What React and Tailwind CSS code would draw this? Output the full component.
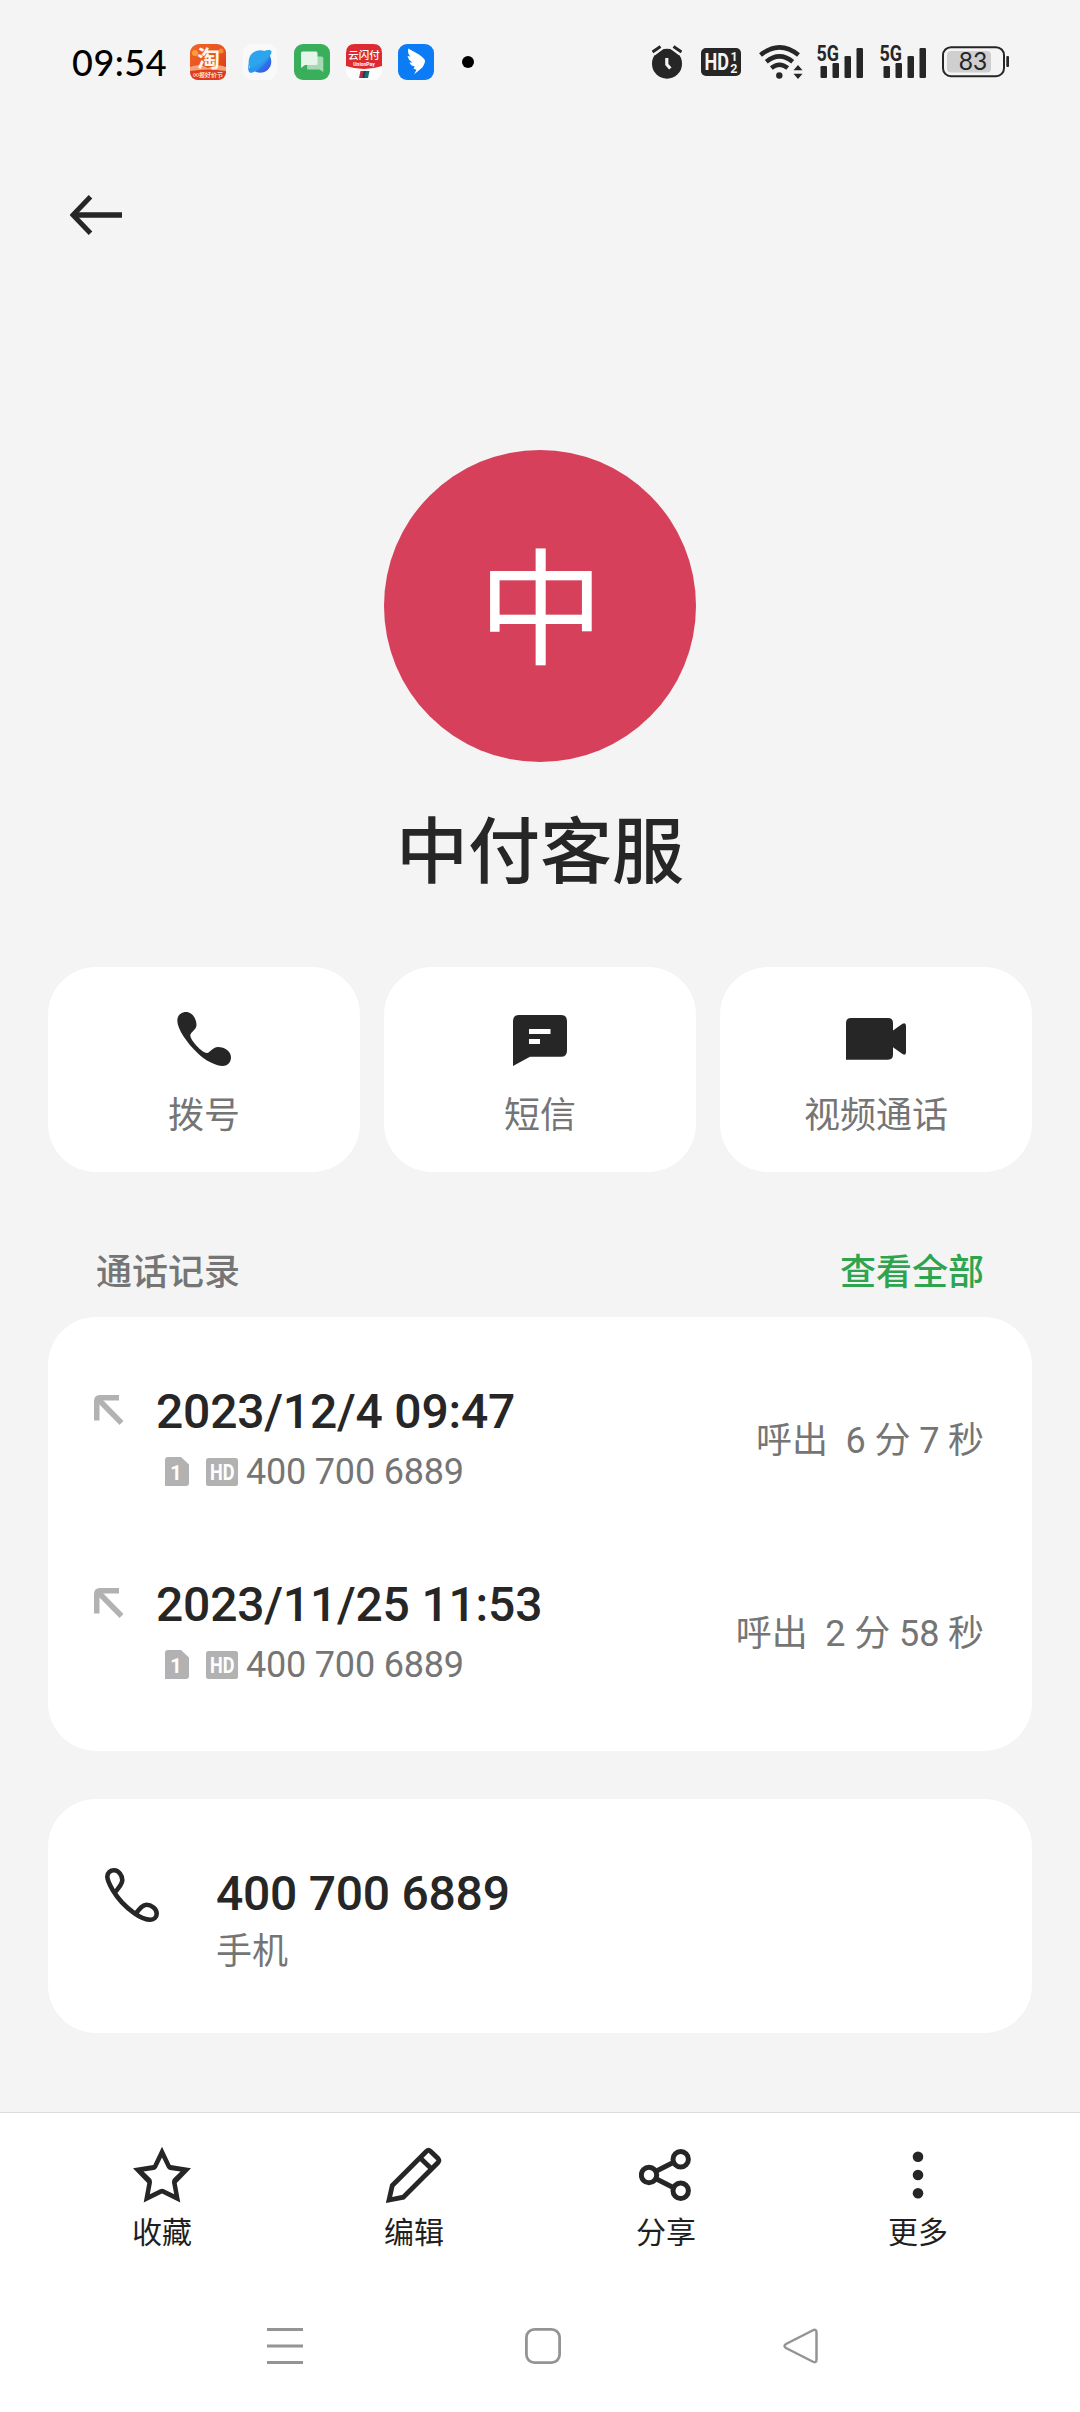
import React from 'react';

const calls = [
    { id: 1, time: '2023/12/4 09:47', number: '400 700 6889', duration: '呼出  6 分 7 秒' },
    { id: 2, time: '2023/11/25 11:53', number: '400 700 6889', duration: '呼出  2 分 58 秒' }
];

const TaobaoIcon = () => (
    <svg className="overflow-visible" width="36" height="36" viewBox="0 0 36 36">
        <defs>
            <linearGradient id="tb" x1="0" y1="0" x2="1" y2="1">
                <stop offset="0" stopColor="#f0642a" />
                <stop offset="0.5" stopColor="#e8541f" />
                <stop offset="1" stopColor="#d83018" />
            </linearGradient>
        </defs>
        <rect width="36" height="36" rx="9" fill="url(#tb)" />
        <circle cx="5" cy="9" r="3" fill="#f9a03c" />
        <circle cx="31" cy="7" r="2.5" fill="#f58a3a" />
        <path d="M0 23 Q9 19 18 24 Q27 19 36 23 V28 H0Z" fill="#f2a47c" />
        <path d="M0 27 Q18 24 36 27 Q36 36 27 36 H9 Q0 36 0 27Z" fill="#e23a1c" />
        <text x="18.500" y="22.500" textAnchor="middle" fontSize="23" fontWeight="700" fill="#fff3ea" fontFamily="Noto Sans CJK SC, sans-serif">淘</text>
        <text x="18" y="33.300" textAnchor="middle" fontSize="6" fontWeight="500" fill="#fff" fontFamily="Noto Sans CJK SC, sans-serif">∞报好价节</text>
    </svg>
);

const BrowserIcon = () => (
    <svg width="36" height="36" viewBox="0 0 36 36">
        <defs>
            <linearGradient id="br" x1="0" y1="0" x2="1" y2="1">
                <stop offset="0" stopColor="#2fb4ee" />
                <stop offset="0.55" stopColor="#2b86ee" />
                <stop offset="1" stopColor="#3a44e0" />
            </linearGradient>
        </defs>
        <rect x="1" width="34" height="36" rx="9" fill="#f9f9f9" />
        <circle cx="18" cy="17.5" r="11.3" fill="url(#br)" />
        <path d="M22 7 C26 5.500 30 5.500 29.500 8.500 C29 12 22 20 8 25 C6 19 9 11 14 8Z" fill="#2da5ee" />
        <path d="M7 18 C5.500 24 6 29 9 28.800 C13 28.500 24 20 28.500 12 C24 17 15 23 7 24Z" fill="#2b96ee" />
    </svg>
);

const MessagesIcon = () => (
    <svg width="36" height="36" viewBox="0 0 36 36">
        <rect width="36" height="36" rx="9" fill="#3aaf5b" />
        <path d="M14 12.500 H27.500 Q29.300 12.500 29.300 14.300 V28 L25.500 25.500 H14.500 Q13 25.500 13 24Z" fill="#a5dab2" />
        <path d="M8.500 7.500 H22 Q23.500 7.500 23.500 9 V19.500 Q23.500 21 22 21 H11 L7 24 V9 Q7 7.500 8.500 7.500Z" fill="#e6f5e9" />
    </svg>
);

const UnionPayIcon = () => (
    <svg className="overflow-visible" width="36" height="36" viewBox="0 0 36 36">
        <rect width="36" height="36" rx="9" fill="#fdfdfd" />
        <path d="M0 9 Q0 0 9 0 H27 Q36 0 36 9 V22 Q27 25 18 25 Q9 25 0 22Z" fill="#dd2a30" />
        <text x="18" y="15" textAnchor="middle" fontSize="10.500" fontWeight="500" fill="#fff" fontFamily="Noto Sans CJK SC, sans-serif">云闪付</text>
        <text x="18" y="21.500" textAnchor="middle" fontSize="5" fontWeight="700" fill="#fff" fontFamily="Roboto, sans-serif">UnionPay</text>
        <path d="M14.500 27 H18 L16.500 34 H13Z" fill="#c8273a" />
        <path d="M17.500 27 H20.500 L19 34 H16Z" fill="#1d3f66" />
        <path d="M20 27 H23.500 L22 34 H18.500Z" fill="#14716f" />
    </svg>
);

const DingTalkIcon = () => (
    <svg width="36" height="36" viewBox="0 0 36 36">
        <rect width="36" height="36" rx="9" fill="#0b7cf5" />
        <path d="M10.300 4.500 C16 8 23 10.500 26.500 15.500 C27.500 17.300 27 18.500 25.500 21.500 L24.300 23.500 L16 30.500 L18.500 25.800 L15.500 24.800 L16.800 22.500 C14 22 12.500 20.800 11.500 18.500 L14.500 18.400 C11.500 16.800 10.300 14.800 9.600 12 L12.500 12.600 C10.200 10.500 9.600 8 10.300 4.500Z" fill="#fff" />
    </svg>
);

const AlarmIcon = () => (
    <svg width="30" height="34" viewBox="0 0 30 34">
        <circle cx="15" cy="18.700" r="15" fill="#262626" />
        <path d="M1 7.500 L9 1.500 M21 1.500 L29 7.500" stroke="#f4f4f4" strokeWidth="7" />
        <path d="M0.500 7 L8.500 1.500 M21.500 1.500 L29.500 7" stroke="#262626" strokeWidth="3" />
        <path d="M14.800 13 V19.500 L18.300 23.500" fill="none" stroke="#f4f4f4" strokeWidth="3.200" />
    </svg>
);

const HdBadge = () => (
    <svg className="overflow-visible" width="40" height="28" viewBox="0 0 40 28">
        <rect width="40" height="28" rx="5" fill="#262626" />
        <g fill="#f4f4f4" fontFamily="Roboto, sans-serif" fontWeight="700">
            <text x="3.500" y="22" fontSize="23" textLength="24.500" lengthAdjust="spacingAndGlyphs">HD</text>
            <text x="29.500" y="12.800" fontSize="12.500">1</text>
            <text x="29.300" y="25" fontSize="12.500">2</text>
        </g>
    </svg>
);

const WifiIcon = () => (
    <svg width="44" height="34" viewBox="0 0 44 34">
        <g fill="none" stroke="#262626" strokeWidth="4.500">
            <path d="M1.500 10 Q20.500 -5.300 39.500 10" />
            <path d="M7.300 16.800 Q20.500 6 33.700 16.800" />
            <path d="M12.300 23 Q20.500 16.500 28.700 23" />
        </g>
        <circle cx="20.300" cy="30.500" r="3.200" fill="#262626" />
        <path d="M34.500 25.300 L39 20 L43.500 25.300Z M34.500 28.700 H43.500 L39 34Z" fill="#262626" />
    </svg>
);

const SignalIcon = () => (
    <svg className="overflow-visible" width="46" height="32" viewBox="0 0 46 32" fill="#262626">
        <rect x="3.500" y="20" width="6.500" height="12" rx="1.200" />
        <rect x="15.500" y="17" width="6.500" height="15" rx="1.200" />
        <rect x="27.500" y="10" width="6.500" height="22" rx="1.200" />
        <rect x="39.500" y="2" width="6.500" height="30" rx="1.200" />
        <text x="-0.500" y="15.300" fontSize="21.500" fontWeight="700" fontFamily="Roboto, sans-serif" textLength="22.500" lengthAdjust="spacingAndGlyphs">5G</text>
    </svg>
);

const BatteryIcon = () => (
    <svg className="overflow-visible" width="67" height="32" viewBox="0 0 67 32">
        <rect x="5" y="5" width="44" height="21.500" rx="4" fill="#cfcfcf" />
        <rect x="1" y="1.200" width="61" height="29" rx="8" fill="none" stroke="#262626" strokeWidth="2" />
        <rect x="64.300" y="10" width="2.700" height="11" rx="1" fill="#262626" />
        <text x="31" y="24.300" textAnchor="middle" fontSize="24.500" fill="#262626" fontFamily="Lato, sans-serif">83</text>
    </svg>
);

const StatusBar = () => (
    <div className="flex h-[124px] items-center pr-[71px] pl-[72px]">
        <span className="w-[118px] font-['Lato'] text-[36px] leading-none font-medium tracking-[0.5px] text-black">09:54</span>
        <div className="flex items-center gap-4">
            <TaobaoIcon />
            <BrowserIcon />
            <MessagesIcon />
            <UnionPayIcon />
            <DingTalkIcon />
        </div>
        <span className="ml-7 size-3 rounded-full bg-black" />
        <div className="ml-auto flex items-center">
            <AlarmIcon />
            <span className="ml-[19px]"><HdBadge /></span>
            <span className="ml-[18px]"><WifiIcon /></span>
            <span className="ml-[14px]"><SignalIcon /></span>
            <span className="ml-[17px]"><SignalIcon /></span>
            <span className="ml-4"><BatteryIcon /></span>
        </div>
    </div>
);

const DialIcon = () => (
    <svg width="54" height="54" viewBox="0 0 54 54" fill="#262626">
        <path d="M0.300 8.500 C0.300 3.500 4 0 9 0 C15 0 19.500 6.500 19.500 13 C19.500 18 13.300 20 13.300 23.500 C13.300 28 25 41 30 41 C33 41 35.500 35 41 35 C48 35 54 39.500 54 45.500 C54 50.500 50 54 45.500 54 C39 54 28 48.500 20.500 41 C10 31 0.300 17 0.300 8.500Z" />
    </svg>
);

const SmsIcon = () => (
    <svg width="54" height="54" viewBox="0 -3 54 54">
        <path d="M6 0 H48 Q54 0 54 6 V35.700 Q54 41.700 48 41.700 H17 L0 51 V6 Q0 0 6 0Z" fill="#262626" />
        <path d="M16 14 H37.500 V19 H16Z M16 24 H27 V29 H16Z" fill="#fff" />
    </svg>
);

const VideoIcon = () => (
    <svg width="60" height="42" viewBox="0 0 60 42" fill="#262626">
        <path d="M5 0 H42 Q47 0 47 5 V12.500 L56.500 5.800 Q60 4 60 8 V34 Q60 38 56.500 36 L47 29.200 V36.500 Q47 41.700 42 41.700 H0 V5 Q0 0 5 0Z" />
    </svg>
);

const ActionCard = ({ icon, label }) => (
    <button className="flex h-[205px] flex-col items-center rounded-[48px] bg-white">
        <span className="mt-[42px] flex h-[60px] items-center">{icon}</span>
        <span className="mt-5 text-[36px] leading-[54px] text-[#757575]">{label}</span>
    </button>
);

const OutgoingIcon = () => (
    <svg width="30" height="30" viewBox="0 0 30 30" fill="none" stroke="#b2b2b2" strokeWidth="5.500">
        <path d="M2.750 25.500 V6 Q2.750 2.750 6 2.750 H25" />
        <path d="M3.500 3.500 L27.500 28" />
    </svg>
);

const SimIcon = () => (
    <svg width="24" height="29" viewBox="0 0 24 29">
        <path d="M3 0 H16 L24 7.500 V26 Q24 29 21 29 H0 V3 Q0 0 3 0Z" fill="#b2b2b2" />
        <text x="11" y="22.500" textAnchor="middle" fontSize="20" fontWeight="700" fill="#fff" fontFamily="Roboto, sans-serif">1</text>
    </svg>
);

const HdIcon = () => (
    <svg width="32" height="28" viewBox="0 0 32 28">
        <rect width="32" height="28" rx="2.500" fill="#b2b2b2" />
        <text x="4" y="22" fontSize="22" fontWeight="700" fill="#fff" fontFamily="Roboto, sans-serif" textLength="24.500" lengthAdjust="spacingAndGlyphs">HD</text>
    </svg>
);

const CallRow = ({ call }) => (
    <div className="flex h-[193px] items-center pr-12 pl-[46px]">
        <span className="mb-[55px]"><OutgoingIcon /></span>
        <div className="mt-2 ml-[32px]">
            <div className="text-[48px] leading-[60px] font-medium tracking-[-0.2px] text-[#262626]">{call.time}</div>
            <div className="flex items-center pl-[9px]">
                <SimIcon />
                <span className="ml-[17px]"><HdIcon /></span>
                <span className="ml-2 h-[60px] text-[36px] leading-[60px] tracking-[-0.2px] text-[#757575]">{call.number}</span>
            </div>
        </div>
        <span className="mt-1.5 ml-auto text-[36px] leading-[50px] tracking-[-0.1px] whitespace-pre text-[#757575]">{call.duration}</span>
    </div>
);

const HandsetIcon = () => (
    <svg width="54" height="54" viewBox="0 0 54 54" fill="none" stroke="#262626" strokeWidth="4.600">
        <path d="M10.800 23.500 C13.500 19.500 17.300 16.500 17.300 12 C17.300 8 14 2.300 9 2.300 C5.500 2.300 2.300 4.500 2.300 8.500 C2.300 13 5.500 18 8 22.500 C13 31 22 40 29.500 45.300 C34 48.500 41 51.700 45.500 51.700 C49 51.700 51.700 49 51.700 45.500 C51.700 40.500 46 36.700 41.500 36.700 C37.500 36.700 34.500 41 31 45.300" />
    </svg>
);

const StarIcon = () => (
    <svg width="58" height="58" viewBox="0 0 58 58" fill="#262626">
        <path fillRule="evenodd" d="M29 0.700 L37.700 19 L58 22.300 L43.700 37 L47.300 56.500 L29 47.500 L10.700 56.500 L14.300 37 L0 22.300 L20.300 19Z M29 11.500 L24 21.800 Q23 23.700 21 24 L10.500 25.500 L17.500 32.300 Q19.500 34.200 19 36.500 L16.800 48.300 L27 43.200 Q29 42.200 31 43.200 L41.200 48.300 L39 36.500 Q38.500 34.200 40.500 32.300 L47.500 25.500 L37 24 Q35 23.700 34 21.800Z" />
    </svg>
);

const EditIcon = () => (
    <svg width="56" height="58" viewBox="0 -1 56 58" fill="none" stroke="#262626" strokeWidth="4.800">
        <path d="M3 53 L6.300 38.500 L40.500 4.200 Q42.500 2.400 44.500 4.200 L52 11.500 Q53.700 13.500 52 15.500 L17.300 50.200Z" />
        <path d="M34 10.700 L45.700 22" />
    </svg>
);

const ShareIcon = () => (
    <svg width="54" height="58" viewBox="0 -3 54 58" fill="none" stroke="#262626" strokeWidth="5">
        <circle cx="10" cy="26" r="7.700" />
        <circle cx="41.700" cy="10.300" r="7.700" />
        <circle cx="41.700" cy="41.700" r="7.700" />
        <path d="M17 22.300 L34.700 13.200 M17 29.700 L34.700 38.800" />
    </svg>
);

const MoreIcon = () => (
    <svg width="12" height="58" viewBox="0 0 12 58" fill="#262626">
        <circle cx="6" cy="10.700" r="5.300" />
        <circle cx="6" cy="29" r="5.300" />
        <circle cx="6" cy="47.300" r="5.300" />
    </svg>
);

const ToolButton = ({ icon, label }) => (
    <button className="flex flex-col items-center pt-[33px]">
        {icon}
        <span className="mt-2 text-[30px] leading-[42px] text-[#1f1f1f]">{label}</span>
    </button>
);

const NavBar = () => (
    <div className="flex justify-center gap-[222px] pr-[4px] pb-12 pl-[10px]">
        <svg width="36" height="36" viewBox="0 0 36 36" fill="none" stroke="#949494" strokeWidth="3">
            <path d="M0 1.500 H36 M0 18 H36 M0 34.500 H36" />
        </svg>
        <svg width="36" height="36" viewBox="0 0 36 36" fill="none" stroke="#949494" strokeWidth="2.800">
            <rect x="1.400" y="1.400" width="33.200" height="33.200" rx="8" />
        </svg>
        <svg width="36" height="36" viewBox="0 0 36 36" fill="none" stroke="#949494" strokeWidth="2.500">
            <path d="M29.500 2.500 Q33.500 0.500 33.500 4.500 V31.500 Q33.500 35.500 29.500 33.500 L3 20 Q0 18 3 16Z" />
        </svg>
    </div>
);

const App = () => {
    return (
        <div className="flex h-[2412px] w-[1080px] flex-col overflow-hidden bg-[#f4f4f4] font-['Roboto','Noto_Sans_CJK_SC',sans-serif]">
            <StatusBar />

            <header className="flex h-[182px] items-center pl-[70px]">
                <svg width="53" height="40" viewBox="0 0 53 40" fill="none" stroke="#262626" strokeWidth="5">
                    <path d="M20.500 1.800 L3 20 L20.500 38.200" />
                    <path d="M3 20 H52" strokeWidth="5.600" />
                </svg>
            </header>

            <section className="mt-36 flex flex-col items-center">
                <div className="flex size-[312px] items-center justify-center rounded-full bg-[#d6405a] pb-3 pl-0.5 font-['Noto_Sans_CJK_SC'] text-[126px] leading-none text-white">
                    中
                </div>
                <h1 className="mt-[41px] text-[72px] leading-[100px] font-medium text-[#262626]">中付客服</h1>
            </section>

            <section className="mt-16 grid grid-cols-3 gap-6 px-12">
                <ActionCard icon={<DialIcon />} label="拨号" />
                <ActionCard icon={<SmsIcon />} label="短信" />
                <ActionCard icon={<VideoIcon />} label="视频通话" />
            </section>

            <div className="mt-[74px] flex justify-between px-24 text-[36px] leading-[54px] font-medium">
                <span className="text-[#757575]">通话记录</span>
                <span className="text-[#2ea44f]">查看全部</span>
            </div>

            <section className="mx-12 mt-[17px] rounded-[48px] bg-white py-6">
                {calls.map((call) => (
                    <CallRow key={call.id} call={call} />
                ))}
            </section>

            <section className="mx-12 mt-12 flex h-[234px] rounded-[48px] bg-white pl-[57px]">
                <span className="mt-[69px]"><HandsetIcon /></span>
                <div className="mt-[65px] ml-[57px]">
                    <div className="text-[48px] leading-[60px] font-medium tracking-[-0.25px] text-[#262626]">400 700 6889</div>
                    <div className="mt-px text-[36px] leading-[54px] text-[#757575]">手机</div>
                </div>
            </section>

            <footer className="mt-auto flex h-[300px] flex-col justify-between border-t border-[#dcdcdc] bg-white">
                <div className="grid grid-cols-4 px-9">
                    <ToolButton icon={<StarIcon />} label="收藏" />
                    <ToolButton icon={<EditIcon />} label="编辑" />
                    <ToolButton icon={<ShareIcon />} label="分享" />
                    <ToolButton icon={<MoreIcon />} label="更多" />
                </div>
                <NavBar />
            </footer>
        </div>
    );
};

export default App;
